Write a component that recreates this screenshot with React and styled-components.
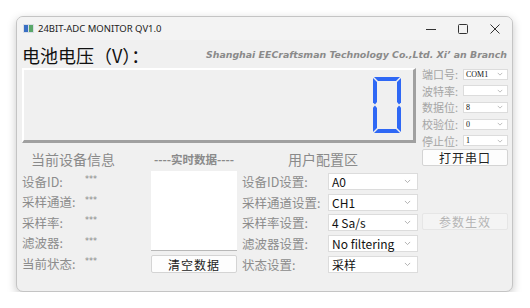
import React from "react";
import styled, { createGlobalStyle } from "styled-components";

const GlobalStyle = createGlobalStyle`
  body {
    margin: 0;
    background: #ffffff;
    font-family: "Noto Sans CJK SC", "Noto Sans", sans-serif;
  }
`;

const Page = styled.div`
  padding: 16px 0 0 16px;
`;

const Window = styled.div`
  box-sizing: border-box;
  width: 497px;
  height: 276px;
  background: #f0f0f0;
  border: 1px solid #c4c4c4;
  border-radius: 7px;
  box-shadow: 0 3px 10px rgba(0, 0, 0, 0.22);
  overflow: hidden;
  display: flex;
  flex-direction: column;
`;

const TitleBar = styled.div`
  height: 23px;
  display: flex;
  align-items: center;
  padding-left: 6px;
  background: #f3f3f3;
`;

const Title = styled.span`
  margin-left: 4px;
  font-family: "Noto Sans", sans-serif;
  font-size: 9.5px;
  color: #222;
  flex: 1;
`;

const Controls = styled.div`
  display: flex;
  align-self: stretch;
  padding-right: 1px;
`;

const CtrlBtn = styled.div`
  width: 32px;
  display: flex;
  align-items: center;
  justify-content: center;
  color: #333;
`;

const Content = styled.div`
  padding: 0 5px;
  flex: 1;
  display: flex;
  flex-direction: column;
`;

const Header = styled.div`
  height: 28px;
  display: flex;
  align-items: center;
  justify-content: space-between;
`;

const BigLabel = styled.div`
  font-size: 18px;
  color: #111;
  padding-top: 1px;
`;

const Company = styled.div`
  font-family: "DejaVu Sans", sans-serif;
  font-style: italic;
  font-weight: bold;
  font-size: 9.4px;
  color: #8a8a8a;
  padding-top: 1px;
`;

const Main = styled.div`
  display: grid;
  grid-template-columns: 396px 86px;
  column-gap: 4px;
`;

const LeftCol = styled.div`
  display: flex;
  flex-direction: column;
`;

const Display = styled.div`
  box-sizing: border-box;
  width: 394px;
  height: 75px;
  border-top: 2px solid #ffffff;
  border-left: 2px solid #ffffff;
  border-right: 3px solid #a0a0a0;
  border-bottom: 3px solid #a0a0a0;
  background: #f0f0f0;
  display: flex;
  align-items: center;
  justify-content: flex-end;
  padding-right: 12px;
`;

const Bottom = styled.div`
  display: grid;
  grid-template-columns: 124px 86px 176px;
  column-gap: 5px;
  margin-top: 5px;
`;

const Section = styled.div`
  display: flex;
  flex-direction: column;
`;

const Heading = styled.div`
  height: 23px;
  line-height: 23px;
  color: #8a8a8a;
  padding-left: ${(p) => p.$indent || 0}px;
  text-align: ${(p) => p.$align || "left"};
  font-weight: ${(p) => (p.$bold ? "bold" : "normal")};
  font-size: ${(p) => (p.$bold ? "11.5px" : "14px")};
`;

const InfoRow = styled.div`
  height: 20.5px;
  display: flex;
  align-items: center;
  font-size: 12.5px;
  color: #8c8c8c;
`;

const InfoLabel = styled.span`
  width: 63px;
`;

const Stars = styled.span`
  font-family: "DejaVu Sans", sans-serif;
  font-size: 8px;
  color: #888;
  margin-top: -3px;
`;

const DataBox = styled.div`
  height: 79px;
  background: #ffffff;
  border-bottom: 1px solid #b8b8b8;
`;

const Button = styled.div`
  box-sizing: border-box;
  height: ${(p) => p.$h || 18}px;
  margin-top: ${(p) => p.$mt || 0}px;
  background: ${(p) => (p.$disabled ? "#f4f4f4" : "#fdfdfd")};
  border: 1px solid ${(p) => (p.$disabled ? "#e6e6e6" : "#d4d4d4")};
  border-radius: 2px;
  display: flex;
  align-items: center;
  justify-content: center;
  font-size: 12px;
  letter-spacing: 1px;
  color: ${(p) => (p.$disabled ? "#b4b4b4" : "#222")};
`;

const ConfigRow = styled.div`
  height: 20.7px;
  display: flex;
  align-items: center;
  font-size: 12.5px;
  color: #8c8c8c;
`;

const ConfigLabel = styled.span`
  width: 86px;
`;

const Select = styled.div`
  box-sizing: border-box;
  width: ${(p) => p.$w}px;
  height: ${(p) => p.$h}px;
  background: #ffffff;
  border: 1px solid #dcdcdc;
  display: flex;
  align-items: center;
  justify-content: space-between;
  padding: 0 ${(p) => (p.$small ? 4 : 6)}px 0 ${(p) => (p.$small ? 2 : 3)}px;
  font-family: ${(p) =>
    p.$small ? '"Liberation Serif", serif' : '"Noto Sans CJK SC", "Noto Sans", sans-serif'};
  font-size: ${(p) => (p.$small ? 8 : 12)}px;
  color: #111;
`;

const RightCol = styled.div`
  display: flex;
  flex-direction: column;
  margin-top: -2px;
`;

const SerialRow = styled.div`
  height: 16.6px;
  display: flex;
  align-items: center;
  font-size: 11px;
  color: #a5a5a5;
`;

const SerialLabel = styled.span`
  width: 41px;
`;

function Chevron({ small }) {
  const w = small ? 6 : 7;
  return (
    <svg width={w} height={w / 2 + 1} viewBox="0 0 8 5">
      <polyline points="1,1 4,4 7,1" fill="none" stroke="#a8a8a8" strokeWidth="1" />
    </svg>
  );
}

function Digit() {
  const c = "#2f68f5";
  return (
    <svg width="28" height="56" viewBox="0 0 28 56">
      <polygon points="1,0 27,0 23,4 5,4" fill={c} />
      <polygon points="0,1 4,5 4,25 2,27.5 0,25.5" fill={c} />
      <polygon points="28,1 24,5 24,25 26,27.5 28,25.5" fill={c} />
      <polygon points="0,30.5 2,28.5 4,31 4,51 0,55" fill={c} />
      <polygon points="28,30.5 26,28.5 24,31 24,51 28,55" fill={c} />
      <polygon points="5,52 23,52 27,56 1,56" fill={c} />
    </svg>
  );
}

function AppIcon() {
  return (
    <svg width="11" height="9" viewBox="0 0 11 9">
      <rect x="0" y="0" width="11" height="9" fill="#d8dde6" />
      <rect x="1" y="1" width="4" height="7" fill="#3a6fc4" />
      <rect x="6" y="1" width="4" height="7" fill="#5aa86a" />
    </svg>
  );
}

const serial = [
  ["端口号:", "COM1"],
  ["波特率:", ""],
  ["数据位:", "8"],
  ["校验位:", "0"],
  ["停止位:", "1"],
];

const info = ["设备ID:", "采样通道:", "采样率:", "滤波器:", "当前状态:"];

const config = [
  ["设备ID设置:", "A0"],
  ["采样通道设置:", "CH1"],
  ["采样率设置:", "4 Sa/s"],
  ["滤波器设置:", "No filtering"],
  ["状态设置:", "采样"],
];

export default function App() {
  return (
    <Page>
      <GlobalStyle />
      <Window>
        <TitleBar>
          <AppIcon />
          <Title>24BIT-ADC MONITOR QV1.0</Title>
          <Controls>
            <CtrlBtn>
              <svg width="10" height="10" viewBox="0 0 10 10">
                <line x1="0" y1="5.5" x2="10" y2="5.5" stroke="#333" strokeWidth="1" />
              </svg>
            </CtrlBtn>
            <CtrlBtn>
              <svg width="10" height="10" viewBox="0 0 10 10">
                <rect x="0.5" y="0.5" width="9" height="9" rx="1" fill="none" stroke="#333" strokeWidth="1" />
              </svg>
            </CtrlBtn>
            <CtrlBtn>
              <svg width="10" height="10" viewBox="0 0 10 10">
                <line x1="0.5" y1="0.5" x2="9.5" y2="9.5" stroke="#333" strokeWidth="1" />
                <line x1="9.5" y1="0.5" x2="0.5" y2="9.5" stroke="#333" strokeWidth="1" />
              </svg>
            </CtrlBtn>
          </Controls>
        </TitleBar>
        <Content>
          <Header>
            <BigLabel>电池电压（V）：</BigLabel>
            <Company>Shanghai EECraftsman Technology Co.,Ltd. Xi’ an Branch</Company>
          </Header>
          <Main>
            <LeftCol>
              <Display>
                <Digit />
              </Display>
              <Bottom>
                <Section>
                  <Heading $indent={9}>当前设备信息</Heading>
                  {info.map((l) => (
                    <InfoRow key={l}>
                      <InfoLabel>{l}</InfoLabel>
                      <Stars>***</Stars>
                    </InfoRow>
                  ))}
                </Section>
                <Section>
                  <Heading $align="center" $bold>
                    ----实时数据----
                  </Heading>
                  <DataBox />
                  <Button $mt={4}>清空数据</Button>
                </Section>
                <Section>
                  <Heading $indent={46}>用户配置区</Heading>
                  {config.map(([l, v]) => (
                    <ConfigRow key={l}>
                      <ConfigLabel>{l}</ConfigLabel>
                      <Select $w={90} $h={17}>
                        <span>{v}</span>
                        <Chevron />
                      </Select>
                    </ConfigRow>
                  ))}
                </Section>
              </Bottom>
            </LeftCol>
            <RightCol>
              {serial.map(([l, v]) => (
                <SerialRow key={l}>
                  <SerialLabel>{l}</SerialLabel>
                  <Select $w={45} $h={11} $small>
                    <span>{v}</span>
                    <Chevron small />
                  </Select>
                </SerialRow>
              ))}
              <Button $mt={0} $h={17}>打开串口</Button>
              <Button $mt={47} $h={17} $disabled>
                参数生效
              </Button>
            </RightCol>
          </Main>
        </Content>
      </Window>
    </Page>
  );
}
